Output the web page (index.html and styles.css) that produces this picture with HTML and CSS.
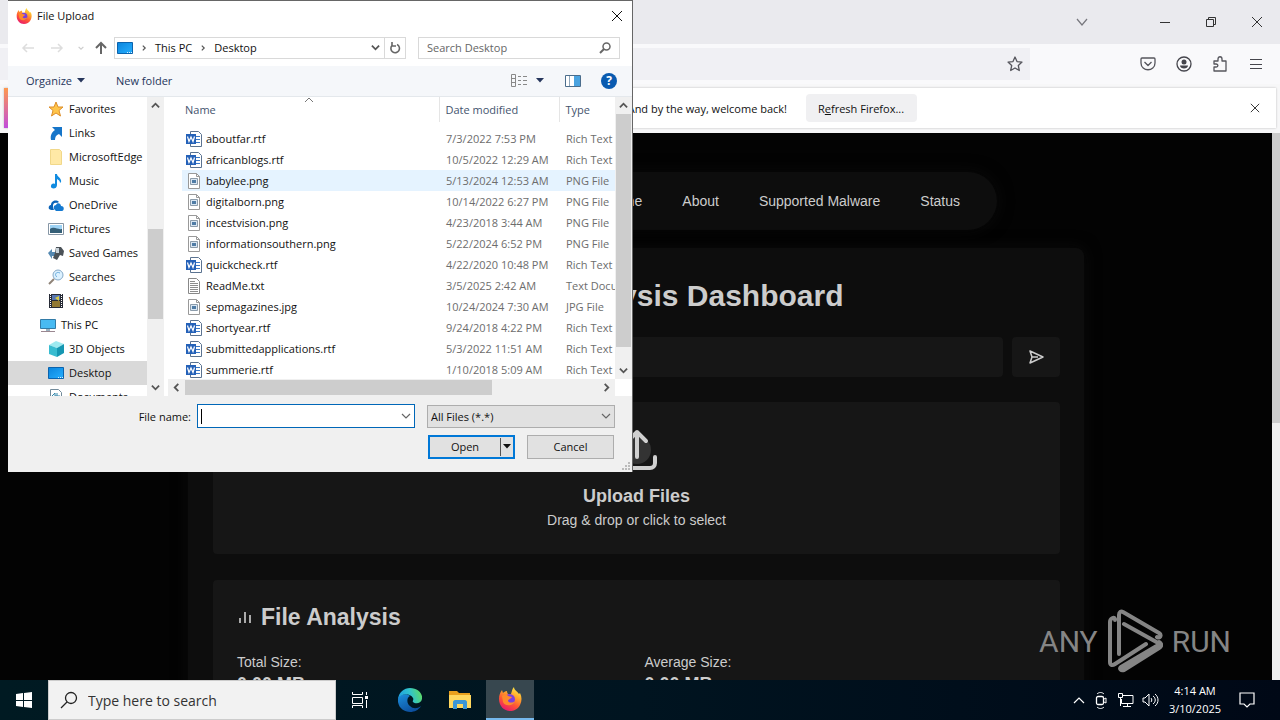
FILE: index.html
```html
<!DOCTYPE html>
<html lang="en">
<head>
  <meta charset="UTF-8">
  <meta name="viewport" content="width=device-width, initial-scale=1.0">
  <title>File Upload</title>
  <link rel="stylesheet" href="styles.css">
</head>
<body>
  <!-- shared icons -->
  <svg class="sprite" aria-hidden="true">
    <defs>
      <linearGradient id="fx-body" x1="0.8" y1="0" x2="0.3" y2="1">
        <stop offset="0" stop-color="#fff04a"/>
        <stop offset="0.35" stop-color="#ffa52c"/>
        <stop offset="0.65" stop-color="#ff5634"/>
        <stop offset="1" stop-color="#e8196f"/>
      </linearGradient>
      <linearGradient id="edge-top" x1="0" y1="0.5" x2="1" y2="0.3">
        <stop offset="0" stop-color="#1f9fe0"/>
        <stop offset="0.5" stop-color="#2fc2cf"/>
        <stop offset="1" stop-color="#5fdc62"/>
      </linearGradient>
      <linearGradient id="edge-low" x1="0" y1="0" x2="0.6" y2="1">
        <stop offset="0" stop-color="#1c8fdc"/>
        <stop offset="1" stop-color="#0c4e9d"/>
      </linearGradient>
      <linearGradient id="screen" x1="0" y1="0" x2="1" y2="1">
        <stop offset="0" stop-color="#0a84dd"/>
        <stop offset="1" stop-color="#27b0ff"/>
      </linearGradient>
    </defs>
    <symbol id="firefox" viewBox="0 0 24 24">
      <path fill="url(#fx-body)" d="M1 12C1 8 2 6 4 3l1 3c1-1 2-2 4-2 0 0 0 2 1 3h3c1-3 1-5 3-7 0 3 3 4 5 7l1-1c2 4 2 8 0 12-2 4-6 6-10 6C6 24 1 19 1 12z"/>
      <circle cx="11.500" cy="12.500" r="5.500" fill="#7a3fe0"/>
      <path fill="#ff8a2b" d="M4 9c2-2 5-2 6 0l4 1c-1 2-4 2-4 4 1 2 5 2 7 0-1 5-10 6-12 1z"/>
    </symbol>
    <symbol id="word" viewBox="0 0 16 16">
      <path fill="#fff" stroke="#5b7391" d="M4.500.500h8l3 3v12h-11z"/>
      <path stroke="#3b78c5" d="M10 5.500h4M10 8.500h4M10 11.500h4"/>
      <path fill="#2461b8" d="M0 3h10v10H0z"/>
      <path fill="none" stroke="#fff" stroke-width="1.200" d="M1.500 5.500 3 10.500 5 6l2 4.500 1.500-5"/>
    </symbol>
    <symbol id="image" viewBox="0 0 16 16">
      <path fill="#fff" stroke="#999" d="M2.500.500h8l3 3v12h-11z"/>
      <path fill="none" stroke="#999" d="M10.500.500v3h3"/>
      <path fill="#d9e6f2" stroke="#8c9cab" d="M4.500 5.500h7v6h-7z"/>
      <path fill="#4f7ca6" d="M6 7h4v3H6z"/>
    </symbol>
    <symbol id="text" viewBox="0 0 16 16">
      <path fill="#fff" stroke="#888" d="M2.500.500h8l3 3v12h-11z"/>
      <path stroke="#8d8d8d" d="M4 3.500h5M4 5.500h8M4 7.500h8M4 9.500h8M4 11.500h8M4 13.500h8"/>
    </symbol>
    <symbol id="desktop" viewBox="0 0 16 16">
      <path fill="url(#screen)" stroke="#0b63ad" d="M.500 2.500h15v11H.500z"/>
      <path stroke="#d8efff" stroke-dasharray="1 1" d="M10 12.500h5"/>
    </symbol>
    <symbol id="up" viewBox="0 0 10 10"><path fill="none" stroke="#555" stroke-width="2" d="M1 7l4-4 4 4"/></symbol>
    <symbol id="down" viewBox="0 0 10 10"><path fill="none" stroke="#555" stroke-width="2" d="M1 3l4 4 4-4"/></symbol>
    <symbol id="left" viewBox="0 0 10 10"><path fill="none" stroke="#555" stroke-width="2" d="M7 1L3 5l4 4"/></symbol>
    <symbol id="right" viewBox="0 0 10 10"><path fill="none" stroke="#555" stroke-width="2" d="M3 1l4 4-4 4"/></symbol>
    <symbol id="chevron" viewBox="0 0 10 10"><path fill="none" stroke="#666" stroke-width="1.200" d="M1 3l4 4 4-4"/></symbol>
    <symbol id="caret" viewBox="0 0 8 5"><path fill="currentColor" d="M0 0h8L4 4.500z"/></symbol>
    <symbol id="close" viewBox="0 0 12 12"><path fill="none" stroke="currentColor" d="M1 1l10 10M11 1L1 11"/></symbol>
  </svg>

  <main class="browser">
    <div class="tab-strip">
      <button class="icon-btn tabs-btn" aria-label="List all tabs"><svg width="12" height="12" viewBox="0 0 12 12"><path fill="none" stroke="#77777d" stroke-width="1.200" d="M1 3l5 6 5-6"/></svg></button>
      <button class="icon-btn" aria-label="Minimize"><svg width="12" height="12" viewBox="0 0 12 12"><path stroke="#333" d="M1 6.500h10"/></svg></button>
      <button class="icon-btn" aria-label="Restore"><svg width="12" height="12" viewBox="0 0 12 12"><path fill="none" stroke="#333" d="M1.500 3.500h7v7h-7zM3.500 3V1.500h7v7H9"/></svg></button>
      <button class="icon-btn" aria-label="Close"><svg width="12" height="12"><use href="#close"/></svg></button>
    </div>
    <div class="toolbar">
      <div class="url-bar">
        <button class="icon-btn" aria-label="Bookmark"><svg width="16" height="16" viewBox="0 0 16 16"><path fill="none" stroke="#55555c" stroke-width="1.300" stroke-linejoin="round" d="M8 1l2 4.600 5 .500-3.700 3.400 1 5L8 12l-4.300 2.500 1-5L1 6.100l5-.500z"/></svg></button>
      </div>
      <div class="toolbar-actions">
        <button class="icon-btn" aria-label="Pocket"><svg width="16" height="16" viewBox="0 0 16 16"><path fill="none" stroke="#55555c" stroke-width="1.300" stroke-linejoin="round" d="M2 2h12c1 0 1 1 1 1v4c0 9-14 9-14 0V3s0-1 1-1zM4.500 6L8 9.500 11.500 6"/></svg></button>
        <button class="icon-btn" aria-label="Account"><svg width="16" height="16" viewBox="0 0 16 16"><circle cx="8" cy="8" r="7" fill="none" stroke="#45454c" stroke-width="1.300"/><circle cx="8" cy="6" r="2.500" fill="#45454c"/><path fill="#45454c" d="M4 9.500h8c0 4-8 4-8 0z"/></svg></button>
        <button class="icon-btn" aria-label="Extensions"><svg width="16" height="16" viewBox="0 0 16 16"><path fill="none" stroke="#55555c" stroke-width="1.300" stroke-linejoin="round" d="M2 5h4V3c0-3 4-3 4 0v2h4v10H2v-4h2c2.500 0 2.500-3 0-3H2z"/></svg></button>
        <button class="icon-btn" aria-label="Menu"><svg width="16" height="16" viewBox="0 0 16 16"><path stroke="#45454c" d="M2 3.500h12M2 8.500h12M2 12.500h12"/></svg></button>
      </div>
    </div>
    <div class="notification">
      <p>And by the way, welcome back!</p>
      <button class="refresh-btn">R<u>e</u>fresh Firefox...</button>
      <button class="icon-btn notification-close" aria-label="Dismiss"><svg width="10" height="10"><use href="#close"/></svg></button>
    </div>

    <div class="viewport">
      <div class="page">
        <nav class="site-nav">
          <a href="#">Home</a>
          <a href="#">About</a>
          <a href="#">Supported Malware</a>
          <a href="#">Status</a>
        </nav>
        <section class="dashboard">
          <h1>Malware Analysis Dashboard</h1>
          <form class="lookup">
            <input type="text" aria-label="Lookup">
            <button type="button" aria-label="Send"><svg width="16" height="16" viewBox="0 0 16 16"><path fill="none" stroke="#ccc" stroke-width="1.500" stroke-linejoin="round" d="M2 2l13 6-13 6 2-6zM4 8h6"/></svg></button>
          </form>
          <div class="dropzone">
            <svg width="44" height="44" viewBox="0 0 44 44"><circle cx="22" cy="22" r="14" fill="#333"/><path fill="none" stroke="#d0d0d0" stroke-width="4" stroke-linecap="round" stroke-linejoin="round" d="M22 29V4M13 13l9-9 9 9M4 29v6c0 3 2 5 5 5h26c3 0 5-2 5-5v-6"/></svg>
            <h2>Upload Files</h2>
            <p>Drag &amp; drop or click to select</p>
          </div>
          <section class="analysis">
            <h2><svg width="14" height="14" viewBox="0 0 14 14"><path stroke="#aaa" stroke-width="2" d="M3 8v5M8 2v11M13 5v8"/></svg>File Analysis</h2>
            <div class="stats">
              <div><span>Total Size:</span><strong>0.00 MB</strong></div>
              <div><span>Average Size:</span><strong>0.00 MB</strong></div>
            </div>
          </section>
        </section>
      </div>
      <div class="page-scroll"><div class="page-thumb"></div></div>
    </div>
  </main>

  <div class="watermark">
    <span>ANY</span>
    <svg width="56" height="64" viewBox="0 0 56 64"><path fill="none" stroke="#858585" stroke-width="4" stroke-linecap="round" stroke-linejoin="round" d="M8 11V10c-1-2-5-1-5 3v40c0 3 2 4 5 2l31-20M12 45V6c0-3 2-4 4-3l36 21c3 2 1 6-2 4M17 15l36 20-39 23c-2 2 0 4 3 3l35-22c3-2 3-4 0-6"/></svg>
    <span>RUN</span>
  </div>

  <div class="dialog" role="dialog" aria-label="File Upload">
    <div class="title-bar">
      <svg width="16" height="16"><use href="#firefox"/></svg>
      <span>File Upload</span>
      <button class="icon-btn" aria-label="Close"><svg width="12" height="12"><use href="#close"/></svg></button>
    </div>
    <div class="address-row">
      <div class="history">
        <button class="icon-btn" aria-label="Back"><svg width="14" height="12" viewBox="0 0 14 12"><path fill="none" stroke="#ddd" stroke-width="1.500" d="M13 6H2M6 2L2 6l4 4"/></svg></button>
        <button class="icon-btn" aria-label="Forward"><svg width="14" height="12" viewBox="0 0 14 12"><path fill="none" stroke="#ddd" stroke-width="1.500" d="M1 6h11M8 2l4 4-4 4"/></svg></button>
        <button class="icon-btn recent" aria-label="Recent"><svg width="6" height="6" viewBox="0 0 10 10"><path fill="none" stroke="#ccc" stroke-width="2" d="M1 3l4 4 4-4"/></svg></button>
        <button class="icon-btn" aria-label="Up"><svg width="12" height="14" viewBox="0 0 12 14"><path fill="none" stroke="#666" stroke-width="2" d="M6 13V2M1 7l5-5 5 5"/></svg></button>
      </div>
      <div class="address">
        <svg width="16" height="16"><use href="#desktop"/></svg>
        <svg width="6" height="6"><use href="#right"/></svg>
        <a href="#">This PC</a>
        <svg width="6" height="6"><use href="#right"/></svg>
        <a href="#">Desktop</a>
        <button class="icon-btn address-drop" aria-label="Previous locations"><svg width="9" height="9"><use href="#down"/></svg></button>
        <button class="icon-btn reload" aria-label="Refresh"><svg width="12" height="12" viewBox="0 0 12 12"><path fill="none" stroke="#666" stroke-width="1.600" d="M8 2.500a4.300 4.300 0 1 1-5 1M3 0v4h4"/></svg></button>
      </div>
      <div class="search">
        <input type="text" placeholder="Search Desktop" aria-label="Search Desktop">
        <svg width="12" height="12" viewBox="0 0 12 12"><circle cx="7.500" cy="4.500" r="3.500" fill="none" stroke="#666" stroke-width="1.500"/><path stroke="#666" stroke-width="2" d="M5 7l-4 4"/></svg>
      </div>
    </div>
    <div class="command-bar">
      <button>Organize <svg width="8" height="5"><use href="#caret"/></svg></button>
      <button>New folder</button>
      <div class="views">
        <button aria-label="View"><svg width="16" height="14" viewBox="0 0 16 14"><path fill="none" stroke="#888" d="M.500.500h4v12h-4zM.500 4.500h4M.500 8.500h4M7 2.500h3M12 2.500h4M7 6.500h3M12 6.500h4M7 10.500h3M12 10.500h4"/></svg></button>
        <button aria-label="More views"><svg width="8" height="5"><use href="#caret"/></svg></button>
        <button aria-label="Preview pane"><svg width="16" height="12" viewBox="0 0 16 12"><path fill="#fff" stroke="#4b6d8c" d="M.500.500h15v11H.500z"/><path fill="#4aa3e0" d="M9 1h6v10H9z"/><path stroke="#8fa6ba" d="M4.500 1v10"/></svg></button>
        <button class="help" aria-label="Help">?</button>
      </div>
    </div>

    <div class="panes">
      <ul class="tree">
        <li><svg width="16" height="16" viewBox="0 0 16 16"><path fill="#ffc54a" stroke="#dc8e2b" d="M8 1l2 5h5l-4 3.500 1.500 5.500L8 12l-4.500 3L5 9.500 1 6h5z"/></svg>Favorites</li>
        <li><svg width="16" height="16" viewBox="0 0 16 16"><path fill="#1675c9" d="M4 2h10v10l-3-3c-3 1-4 3-4 6H3c-1-5 1-8 4-10z"/></svg>Links</li>
        <li><svg width="16" height="16" viewBox="0 0 16 16"><path fill="#ffe9a6" stroke="#f1d88a" d="M2.500.500h9l2 2v13h-11z"/></svg>MicrosoftEdge</li>
        <li><svg width="16" height="16" viewBox="0 0 16 16"><path fill="#118be0" d="M7 1h2c0 3 5 4 4 8l-1 1c0-3-2-3-3-4v6c0 5-7 4-6 1 0-2 2-3 4-2z"/></svg>Music</li>
        <li><svg width="16" height="16" viewBox="0 0 16 16"><path fill="#0a63b8" d="M1 12c-1-3 1-4 2-4 0-4 5-6 8-3l-2 1C5 5 4 9 6 13H3z"/><path fill="#1479d0" d="M6 12c-1-3 1-4 2-4 1-3 5-2 5 1 4 0 3 5 1 5H8z"/></svg>OneDrive</li>
        <li><svg width="16" height="16" viewBox="0 0 16 16"><path fill="#fff" stroke="#8797a6" d="M.500 2.500h15v11H.500z"/><path fill="#9ed3f5" d="M2 4h12v4H2z"/><path fill="#355f77" d="M2 8c5-3 7 1 12 0v4H2z"/></svg>Pictures</li>
        <li><svg width="16" height="16" viewBox="0 0 16 16"><path fill="#5589b2" d="M0 8l4-4v3h3v4H4v3z"/><path fill="#4b5258" d="M8 2h5l3 4-1 5-3-1-3 5-4-2 2-5z"/><path fill="#c7d2da" d="M8 3h3v5H8z"/></svg>Saved Games</li>
        <li><svg width="16" height="16" viewBox="0 0 16 16"><path stroke="#8f8378" stroke-width="2" d="M6 10l-5 5"/><circle cx="10" cy="6" r="5" fill="#dcf1ff" stroke="#86a9c7"/><path fill="none" stroke="#69abdc" d="M12 4c-4-2-6 2-3 4"/></svg>Searches</li>
        <li><svg width="16" height="16" viewBox="0 0 16 16"><path fill="#272b36" d="M1 1h14v14H1z"/><path fill="#5877b0" d="M4 2h8v5H4z"/><path fill="#927932" d="M4 8h8v6H4z"/><path stroke="#fff" stroke-dasharray="1 1" d="M2.500 1v14M13.500 1v14"/><path fill="#d8cb44" d="M7 5l4-2v5z"/></svg>Videos</li>
        <li class="tree-root"><svg width="16" height="16" viewBox="0 0 16 16"><path fill="#48baf2" stroke="#327ba7" d="M.500 2.500h15v9H.500z"/><path stroke="#9a8790" d="M1 14.500h14"/><path fill="#9bb1bf" d="M6 12h4v2H6z"/></svg>This PC</li>
        <li><svg width="16" height="16" viewBox="0 0 16 16"><path fill="#9eeaf0" d="M8 0l8 3-7 4-8-3z"/><path fill="#38bcd0" d="M1 4l8 3v9l-8-3z"/><path fill="#1597b2" d="M9 7l7-4v9l-7 4z"/></svg>3D Objects</li>
        <li class="selected"><svg width="16" height="16"><use href="#desktop"/></svg>Desktop</li>
        <li><svg width="16" height="16" viewBox="0 0 16 16"><path fill="#fff" stroke="#728b9b" d="M2.500.500h8l3 3v12h-11z"/><path fill="none" stroke="#3386aa" d="M4 7l3-3v3h5M9 4v5M4 10h8"/></svg>Documents</li>
      </ul>
      <div class="scroll-v tree-scroll"><svg width="9" height="9"><use href="#up"/></svg><div class="thumb"></div><svg width="9" height="9"><use href="#down"/></svg></div>
      <div class="files">
        <div class="file-list">
          <svg class="sort-mark" width="9" height="9" viewBox="0 0 9 9"><path fill="none" stroke="#777" d="M0 5l4-4 4 4"/></svg>
          <table>
            <thead>
              <tr><th class="col-name">Name</th><th class="col-date">Date modified</th><th>Type</th></tr>
            </thead>
            <tbody>
              <tr><td><div class="file"><svg width="16" height="16"><use href="#word"/></svg>aboutfar.rtf</div></td><td>7/3/2022 7:53 PM</td><td>Rich Text</td></tr>
              <tr><td><div class="file"><svg width="16" height="16"><use href="#word"/></svg>africanblogs.rtf</div></td><td>10/5/2022 12:29 AM</td><td>Rich Text</td></tr>
              <tr class="hovered"><td><div class="file"><svg width="16" height="16"><use href="#image"/></svg>babylee.png</div></td><td>5/13/2024 12:53 AM</td><td>PNG File</td></tr>
              <tr><td><div class="file"><svg width="16" height="16"><use href="#image"/></svg>digitalborn.png</div></td><td>10/14/2022 6:27 PM</td><td>PNG File</td></tr>
              <tr><td><div class="file"><svg width="16" height="16"><use href="#image"/></svg>incestvision.png</div></td><td>4/23/2018 3:44 AM</td><td>PNG File</td></tr>
              <tr><td><div class="file"><svg width="16" height="16"><use href="#image"/></svg>informationsouthern.png</div></td><td>5/22/2024 6:52 PM</td><td>PNG File</td></tr>
              <tr><td><div class="file"><svg width="16" height="16"><use href="#word"/></svg>quickcheck.rtf</div></td><td>4/22/2020 10:48 PM</td><td>Rich Text</td></tr>
              <tr><td><div class="file"><svg width="16" height="16"><use href="#text"/></svg>ReadMe.txt</div></td><td>3/5/2025 2:42 AM</td><td>Text Document</td></tr>
              <tr><td><div class="file"><svg width="16" height="16"><use href="#image"/></svg>sepmagazines.jpg</div></td><td>10/24/2024 7:30 AM</td><td>JPG File</td></tr>
              <tr><td><div class="file"><svg width="16" height="16"><use href="#word"/></svg>shortyear.rtf</div></td><td>9/24/2018 4:22 PM</td><td>Rich Text</td></tr>
              <tr><td><div class="file"><svg width="16" height="16"><use href="#word"/></svg>submittedapplications.rtf</div></td><td>5/3/2022 11:51 AM</td><td>Rich Text</td></tr>
              <tr><td><div class="file"><svg width="16" height="16"><use href="#word"/></svg>summerie.rtf</div></td><td>1/10/2018 5:09 AM</td><td>Rich Text</td></tr>
            </tbody>
          </table>
        </div>
        <div class="scroll-v list-scroll"><svg width="9" height="9"><use href="#up"/></svg><div class="thumb"></div><svg width="9" height="9"><use href="#down"/></svg></div>
        <div class="scroll-h"><svg width="9" height="9"><use href="#left"/></svg><div class="thumb"></div><svg width="9" height="9"><use href="#right"/></svg></div>
      </div>
    </div>

    <div class="dialog-footer">
      <label for="file-name">File name:</label>
      <div class="combo">
        <span class="text-caret"></span>
        <input type="text" id="file-name">
        <svg width="10" height="10"><use href="#chevron"/></svg>
      </div>
      <div class="filter">
        <select aria-label="File type"><option>All Files (*.*)</option></select>
        <svg width="10" height="10"><use href="#chevron"/></svg>
      </div>
      <div class="actions">
        <div class="open-group">
          <button>Open</button>
          <button class="open-more" aria-label="Open options"><svg width="8" height="5"><use href="#caret"/></svg></button>
        </div>
        <button class="cancel">Cancel</button>
      </div>
    </div>
    <svg class="grip" width="10" height="10" viewBox="0 0 10 10"><path fill="#bbb" d="M7 1h2v2H7zM4 4h2v2H4zM7 4h2v2H7zM1 7h2v2H1zM4 7h2v2H4zM7 7h2v2H7z"/></svg>
  </div>

  <footer class="taskbar">
    <button class="task start" aria-label="Start"><svg width="16" height="16" viewBox="0 0 16 16"><path fill="#fff" d="M0 2l7-1v7H0zM8 1l8-1v8H8zM0 9h7v6l-7-1zM8 9h8v7l-8-1z"/></svg></button>
    <div class="task-search">
      <svg width="18" height="18" viewBox="0 0 18 18"><circle cx="11" cy="7" r="5.500" fill="none" stroke="#222" stroke-width="1.300"/><path stroke="#222" stroke-width="1.300" d="M7 11l-6 6"/></svg>
      <input type="text" placeholder="Type here to search" aria-label="Type here to search">
    </div>
    <div class="pinned">
      <button class="task" aria-label="Task view"><svg width="18" height="16" viewBox="0 0 18 16"><path fill="none" stroke="#fff" d="M1.500 0v2.500h10V0M1.500 5.500h10v6h-10zM1.500 16v-2.500h10V16M15.500 0v3M15.500 8v8"/><path fill="#fff" d="M14 4h3v3h-3z"/></svg></button>
      <button class="task" aria-label="Edge"><svg width="24" height="24" viewBox="0 0 24 24"><path fill="url(#edge-low)" d="M0 11c1-5 9-6 12-3-3 1-4 7 0 10 3 3 7 3 11 0-5 9-21 8-23-4z"/><path fill="url(#edge-top)" d="M0 11C1 4 6 0 12 0c8 0 13 6 12 11-1 5-7 5-9 3-1-1 1-2 0-4C12 5 3 5 0 11z"/></svg></button>
      <button class="task" aria-label="File Explorer"><svg width="22" height="20" viewBox="0 0 22 20"><path fill="#e9a01d" d="M0 1h8l2 2h11v4H0z"/><path fill="#ffd75e" d="M0 5h22v13H0z"/><path fill="#3c96d5" d="M4 19v-7c0-1 1-2 2-2h10c1 0 2 1 2 2v7h-4v-5H8v5z"/></svg></button>
      <button class="task running" aria-label="Firefox"><svg width="24" height="24"><use href="#firefox"/></svg></button>
    </div>
    <div class="tray">
      <svg width="12" height="12" viewBox="0 0 12 12"><path fill="none" stroke="#fff" stroke-width="1.200" d="M1 9l5-5 5 5"/></svg>
      <svg width="16" height="18" viewBox="0 0 16 18"><rect x="3.500" y="5.500" width="7" height="8" rx="1.500" fill="none" stroke="#fff" stroke-width="1.300"/><path fill="none" stroke="#fff" d="M11 8l2-1v5l-2-1M4 3c2-2 5-2 7 0M4 16c2 2 5 2 7 0"/></svg>
      <svg width="17" height="16" viewBox="0 0 17 16"><path fill="none" stroke="#fff" d="M5 3.500h11v8H4.500V7M10.500 12v2.500M6 14.500h8M1.500 1.500h4v4h-4zM3.500 6v8"/></svg>
      <svg width="17" height="16" viewBox="0 0 17 16"><path fill="none" stroke="#fff" d="M1 6h2l4-4v12l-4-4H1zM9 6c1 1 1 3 0 4M11 4c3 2 3 6 0 8M13 2c4 3 4 9 0 12"/></svg>
    </div>
    <div class="clock"><span>4:14 AM</span><span>3/10/2025</span></div>
    <button class="task notices" aria-label="Notifications"><svg width="16" height="17" viewBox="0 0 16 17"><path fill="none" stroke="#fff" stroke-width="1.200" d="M1 1h14v11H11l-3 3-3-3H1z"/></svg></button>
  </footer>
</body>
</html>
```

FILE: styles.css
```css
* {
  box-sizing: border-box;
}
body {
  margin: 0;
  height: 100vh;
  display: flex;
  flex-direction: column;
  overflow: hidden;
  position: relative;
  font-family: "Open Sans", "Noto Sans", sans-serif;
  font-size: 11px;
  color: #111;
  background: #000;
}
button, input, select {
  font: inherit;
  color: inherit;
  margin: 0;
  padding: 0;
  border: none;
  background: none;
  outline: none;
}
svg {
  flex: none;
  display: block;
}
a {
  color: inherit;
  text-decoration: none;
}
h1, h2, p, ul {
  margin: 0;
  padding: 0;
}
.sprite {
  position: absolute;
  width: 0;
  height: 0;
}
.icon-btn {
  display: flex;
  align-items: center;
  justify-content: center;
}

/* browser */
.browser {
  flex: 1;
  min-height: 0;
  display: flex;
  flex-direction: column;
  background: #f7f7f8;
}
.tab-strip {
  display: flex;
  justify-content: flex-end;
  height: 44px;
  background: #eaeaee;
  color: #333;
}
.tab-strip .icon-btn {
  width: 46px;
}
.tab-strip .tabs-btn {
  margin-right: 37px;
}
.toolbar {
  display: flex;
  align-items: center;
  height: 40px;
  padding-right: 16px;
  background: #f9f9fb;
}
.url-bar {
  flex: 1;
  display: flex;
  justify-content: flex-end;
  height: 32px;
  padding-right: 7px;
  margin-right: 110px;
  background: #f0f0f4;
}
.toolbar-actions {
  display: flex;
  gap: 20px;
}
.notification {
  display: flex;
  align-items: center;
  height: 40px;
  margin: 4px 4px 5px;
  padding-right: 16px;
  background: #fff;
  border-left: 4px solid #d45a9c;
  border-image: linear-gradient(#ff9a4a, #c04adf) 1;
  box-shadow: 0 0 2px #bbb;
}
.notification p {
  width: 779px;
  text-align: right;
  white-space: nowrap;
}
.refresh-btn {
  height: 28px;
  padding: 0 13px 0 12px;
  margin-left: 19px;
  border-radius: 4px;
  background: #f0f0f2;
}
.notification-close {
  margin-left: auto;
}

/* page */
.viewport {
  flex: 1;
  min-height: 0;
  display: flex;
  overflow: hidden;
  background: #030303;
}
.page {
  flex: 1;
  padding-top: 39px;
  font-family: "Liberation Sans", Arial, sans-serif;
  font-size: 14px;
  color: #ccc;
}
.page-scroll {
  width: 8px;
  background: #f0f0f0;
}
.page-thumb {
  height: 53%;
  background: #cdcdcd;
}
.site-nav {
  display: flex;
  justify-content: flex-end;
  align-items: center;
  gap: 40px;
  max-width: 722px;
  height: 58px;
  margin: 0 auto 18px;
  padding: 0 37px;
  border-radius: 29px;
  background: #0d0d0d;
  box-shadow: 0 0 16px #0a0a0a;
}
.dashboard {
  max-width: 896px;
  margin: 0 auto;
  padding: 24px 24px 24px 25px;
  border-radius: 8px;
  background: #0d0d0d;
  box-shadow: 0 0 16px #0b0b0b;
}
.dashboard h1 {
  font-size: 30px;
  line-height: 48px;
  margin-bottom: 17px;
  text-align: center;
}
.lookup {
  display: flex;
  gap: 9px;
  height: 40px;
  margin-bottom: 25px;
}
.lookup input {
  flex: 1;
  border-radius: 4px;
  background: #161616;
}
.lookup button {
  display: flex;
  align-items: center;
  justify-content: center;
  width: 48px;
  border-radius: 4px;
  background: #161616;
}
.dropzone {
  display: flex;
  flex-direction: column;
  align-items: center;
  padding: 26px 0 22px;
  margin-bottom: 26px;
  border-radius: 4px;
  background: #161616;
}
.dropzone h2 {
  margin-top: 12px;
  font-size: 18px;
  line-height: 24px;
}
.dropzone p {
  line-height: 24px;
}
.analysis {
  padding: 23px 24px;
  border-radius: 4px;
  background: #161616;
}
.analysis h2 {
  display: flex;
  align-items: center;
  gap: 10px;
  margin-bottom: 20px;
  font-size: 23px;
  line-height: 28px;
}
.stats {
  display: grid;
  grid-template-columns: 1fr 1fr;
  gap: 16px;
}
.stats div {
  display: flex;
  flex-direction: column;
  line-height: 22px;
}
.stats strong {
  font-size: 18px;
}
.watermark {
  position: absolute;
  right: 49px;
  bottom: 47px;
  display: flex;
  align-items: center;
  gap: 9px;
  font-family: Roboto, "Liberation Sans", sans-serif;
  font-size: 30px;
  color: #858585;
}

/* dialog */
.dialog {
  position: absolute;
  left: 8px;
  top: 0;
  width: 625px;
  display: flex;
  flex-direction: column;
  border-top: 1px solid #666;
  border-right: 1px solid #666;
  background: #fff;
}
.title-bar {
  display: flex;
  align-items: center;
  gap: 5px;
  height: 29px;
  padding: 0 9px 0 8px;
}
.title-bar button {
  margin-left: auto;
}
.address-row {
  display: flex;
  align-items: center;
  height: 36px;
  padding: 0 12px 1px;
}
.history {
  display: flex;
  align-items: center;
  gap: 15px;
  width: 94px;
  padding-left: 1px;
}
.history .recent {
  width: 4px;
}
.history .icon-btn:last-child {
  margin-left: -3px;
}
.address {
  flex: 1;
  display: flex;
  align-items: center;
  gap: 8px;
  height: 22px;
  padding-left: 2px;
  margin-right: 12px;
  border: 1px solid #d9d9d9;
}
.address-drop {
  margin-left: auto;
}
.reload {
  width: 21px;
  height: 20px;
  margin-left: -4px;
  border-left: 1px solid #d9d9d9;
}
.search {
  display: flex;
  align-items: center;
  width: 202px;
  height: 22px;
  padding: 0 8px;
  border: 1px solid #d9d9d9;
}
.search input {
  flex: 1;
  min-width: 0;
}
.search input::placeholder {
  color: #666;
}
.command-bar {
  display: flex;
  align-items: center;
  gap: 31px;
  height: 31px;
  padding: 0 15px 1px 18px;
  border-bottom: 1px solid #e4e8ec;
  background: #f5f7fa;
  color: #26365c;
}
.command-bar button {
  display: flex;
  align-items: center;
  gap: 5px;
}
.views {
  display: flex;
  align-items: center;
  gap: 9px;
  margin-left: auto;
}
.views button:nth-child(3) {
  margin: 0 11px 0 12px;
}
.command-bar .help {
  justify-content: center;
  width: 16px;
  height: 16px;
  border-radius: 50%;
  background: #0a5bb0;
  color: #fff;
  font-size: 12px;
  font-weight: bold;
}
.panes {
  display: flex;
  height: 299px;
  overflow: hidden;
}
.tree {
  width: 139px;
  list-style: none;
}
.tree li {
  display: flex;
  align-items: center;
  gap: 5px;
  height: 24px;
  padding: 0 0 1px 40px;
  white-space: nowrap;
}
.tree .tree-root {
  padding-left: 32px;
}
.tree .selected {
  background: #d9d9d9;
}
.scroll-v {
  display: flex;
  flex-direction: column;
  align-items: center;
  justify-content: space-between;
  width: 17px;
  padding: 4px 0;
  background: #f0f0f0;
}
.scroll-v .thumb {
  width: 15px;
  background: #cdcdcd;
}
.tree-scroll .thumb {
  height: 90px;
  margin-top: 55px;
}
.files {
  flex: 1;
  min-width: 0;
  display: grid;
  grid-template-columns: 1fr 17px;
  grid-template-rows: 282px 17px;
  padding-left: 4px;
}
.list-scroll .thumb {
  height: 233px;
  margin-bottom: 16px;
}
.scroll-h {
  display: flex;
  align-items: center;
  justify-content: space-between;
  padding: 0 4px;
  background: #f0f0f0;
}
.scroll-h .thumb {
  width: 307px;
  height: 15px;
  margin: 0 auto 0 4px;
  background: #cdcdcd;
}
.file-list {
  position: relative;
  overflow: hidden;
}
.sort-mark {
  position: absolute;
  left: 137px;
  top: 0;
}
table {
  width: 433px;
  margin-left: 14px;
  table-layout: fixed;
  border-collapse: collapse;
}
th {
  height: 25px;
  padding: 0 0 0 6px;
  border-left: 1px solid #e5e5e5;
  text-align: left;
  font-weight: normal;
  color: #44546e;
}
th.col-name {
  width: 257px;
  padding-left: 3px;
  border-left: none;
}
th.col-date {
  width: 120px;
}
tbody::before {
  content: "";
  display: block;
  height: 6px;
}
td {
  height: 21px;
  padding: 0 0 0 7px;
  color: #6d6d6d;
  white-space: nowrap;
  overflow: hidden;
}
td:first-child {
  padding-left: 4px;
  color: #111;
}
.file {
  display: flex;
  align-items: center;
  gap: 4px;
}
.hovered {
  background: #e5f3ff;
}
.dialog-footer {
  display: grid;
  grid-template-columns: 183px 218px 194px;
  column-gap: 6px;
  row-gap: 6px;
  align-items: center;
  height: 76px;
  padding: 8px 0 13px;
  background: #f0f0f0;
}
.dialog-footer label {
  text-align: right;
}
.combo {
  display: flex;
  align-items: center;
  height: 24px;
  padding: 0 3px;
  border: 1px solid #0067b8;
  background: #fff;
}
.combo input {
  flex: 1;
  min-width: 0;
}
.text-caret {
  width: 1px;
  height: 15px;
  background: #000;
}
.filter {
  display: flex;
  align-items: center;
  height: 23px;
  margin-left: 6px;
  padding: 0 3px;
  border: 1px solid #adadad;
  background: #e1e1e1;
}
.filter select {
  flex: 1;
  appearance: none;
}
.actions {
  grid-column: 3;
  display: flex;
  justify-content: space-between;
  padding: 0 1px 0 7px;
}
.open-group {
  display: flex;
  align-items: center;
  width: 87px;
  height: 24px;
  border: 2px solid #0078d7;
  background: #e1e1e1;
}
.open-group button:first-child {
  flex: 1;
}
.open-more {
  display: flex;
  align-items: center;
  justify-content: center;
  width: 13px;
  height: 18px;
  border-left: 1px solid #555;
}
.cancel {
  width: 87px;
  height: 24px;
  border: 1px solid #adadad;
  background: #e1e1e1;
}
.grip {
  position: absolute;
  right: 1px;
  bottom: 1px;
}

/* taskbar */
.taskbar {
  display: flex;
  height: 40px;
  background: linear-gradient(to right, #001a22, #001420 50%, #000816);
  color: #fff;
}
.pinned {
  display: flex;
  gap: 2px;
}
.task {
  display: flex;
  align-items: center;
  justify-content: center;
  width: 48px;
}
.running {
  background: #37474f;
  border-bottom: 2px solid #76b9ed;
}
.task-search {
  display: flex;
  align-items: center;
  gap: 10px;
  width: 288px;
  padding: 0 11px;
  border: 1px solid #ccc;
  background: #f2f2f2;
  color: #222;
  font-size: 14px;
}
.task-search input {
  flex: 1;
  min-width: 0;
}
.task-search input::placeholder {
  color: #333;
}
.tray {
  display: flex;
  align-items: center;
  gap: 8px;
  margin-left: auto;
}
.clock {
  display: flex;
  flex-direction: column;
  align-items: center;
  justify-content: center;
  width: 72px;
  line-height: 18px;
}
.notices {
  width: 32px;
  margin-right: 17px;
}
```
